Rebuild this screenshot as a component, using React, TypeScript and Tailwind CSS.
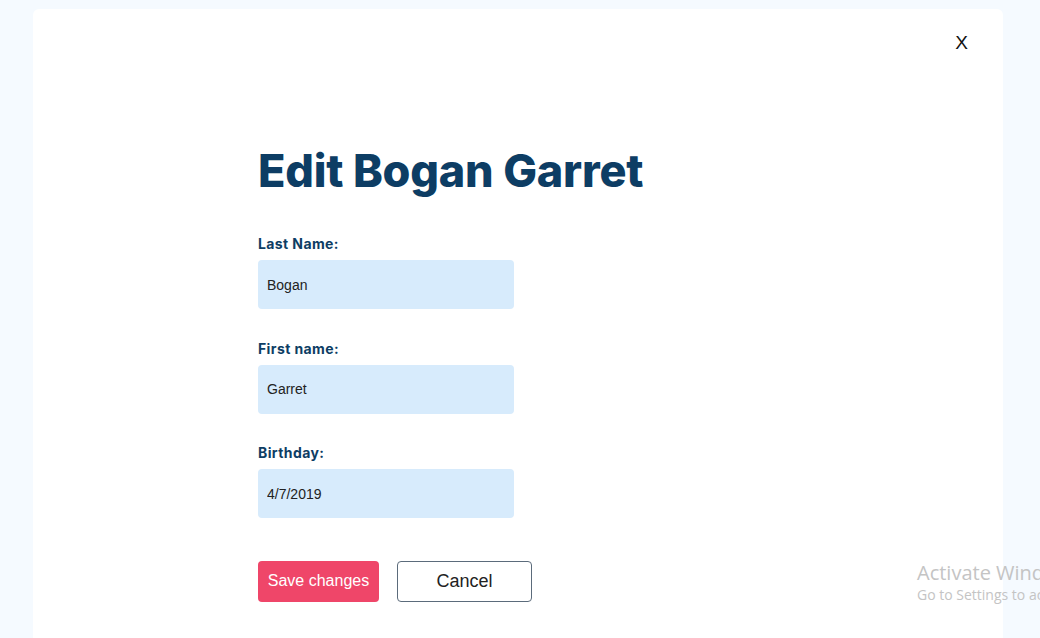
import { useState } from "react";

const fields = [
  { id: "lastName", label: "Last Name:", value: "Bogan" },
  { id: "firstName", label: "First name:", value: "Garret" },
  { id: "birthday", label: "Birthday:", value: "4/7/2019" },
];

export default function App() {
  const [values, setValues] = useState<Record<string, string>>(
    Object.fromEntries(fields.map((f) => [f.id, f.value]))
  );

  return (
    <div className="relative h-screen w-full overflow-hidden bg-[#f5faff] pl-[33px] pr-[37px] pt-[9px]">
      <div className="flex h-full flex-col rounded-t-md bg-white">
        <div className="flex justify-end pr-[35px] pt-[22px]">
          <button className="text-[19px] leading-6 text-[#111] font-['Liberation_Sans',sans-serif]">
            X
          </button>
        </div>

        <div className="pl-[225px] pt-[88px]">
          <h1 className="text-[45px] font-extrabold leading-[56px] tracking-[-0.2px] text-[#0d3d64] font-['Inter',sans-serif]">
            Edit Bogan Garret
          </h1>

          <form className="mt-[35px] flex flex-col" onSubmit={(e) => e.preventDefault()}>
            {fields.map((field) => (
              <div key={field.id} className="mb-[29.5px] flex flex-col">
                <label
                  htmlFor={field.id}
                  className="mb-[6px] text-[14px] font-bold leading-5 tracking-[0.4px] text-[#0d3d64] font-['Inter',sans-serif]"
                >
                  {field.label}
                </label>
                <input
                  id={field.id}
                  value={values[field.id]}
                  onChange={(e) => setValues({ ...values, [field.id]: e.target.value })}
                  className="h-[49px] w-[256px] rounded bg-[#d7ebfc] px-[9px] text-[14px] text-[#222] outline-none font-['Liberation_Sans',sans-serif]"
                />
              </div>
            ))}

            <div className="mt-[13px] flex gap-[18px]">
              <button className="h-[41px] w-[121px] rounded bg-[#ef4669] text-[16px] text-white font-['Liberation_Sans',sans-serif]">
                Save changes
              </button>
              <button
                type="button"
                className="h-[41px] w-[135px] rounded border border-[#5b6b7b] bg-white text-[18px] text-[#222] font-['Liberation_Sans',sans-serif]"
              >
                Cancel
              </button>
            </div>
          </form>
        </div>
      </div>

      <div className="pointer-events-none absolute left-[917px] top-[561px] whitespace-nowrap text-[#c4c4c4] font-['Open_Sans',sans-serif]">
        <div className="text-[20px] leading-6">Activate Windows</div>
        <div className="text-[14px] leading-5">Go to Settings to activate Windows.</div>
      </div>
    </div>
  );
}
